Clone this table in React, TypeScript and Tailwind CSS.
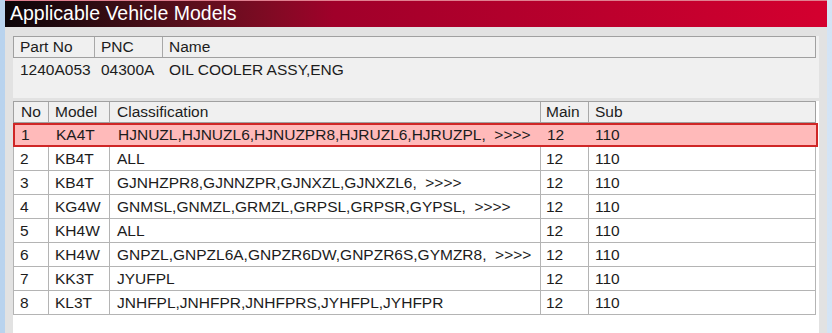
import React from "react";

const rows = [
  { no: "1", model: "KA4T", cls: "HJNUZL,HJNUZL6,HJNUZPR8,HJRUZL6,HJRUZPL,  >>>>", main: "12", sub: "110" },
  { no: "2", model: "KB4T", cls: "ALL", main: "12", sub: "110" },
  { no: "3", model: "KB4T", cls: "GJNHZPR8,GJNNZPR,GJNXZL,GJNXZL6,  >>>>", main: "12", sub: "110" },
  { no: "4", model: "KG4W", cls: "GNMSL,GNMZL,GRMZL,GRPSL,GRPSR,GYPSL,  >>>>", main: "12", sub: "110" },
  { no: "5", model: "KH4W", cls: "ALL", main: "12", sub: "110" },
  { no: "6", model: "KH4W", cls: "GNPZL,GNPZL6A,GNPZR6DW,GNPZR6S,GYMZR8,  >>>>", main: "12", sub: "110" },
  { no: "7", model: "KK3T", cls: "JYUFPL", main: "12", sub: "110" },
  { no: "8", model: "KL3T", cls: "JNHFPL,JNHFPR,JNHFPRS,JYHFPL,JYHFPR", main: "12", sub: "110" },
];

export default function App() {
  return (
    <div
      className="w-[832px] h-[333px] overflow-hidden flex bg-gradient-to-r from-[#b9d3ee] to-[#d4e4f5] text-[#1c1c1c]"
      style={{ fontFamily: '"Liberation Sans", Arial, sans-serif' }}
    >
      <div className="ml-[5px] w-[822px] flex flex-col bg-[#e2e2e2]">
        {/* title bar */}
        <div className="h-[27px] shrink-0 flex items-center pl-[5px] bg-gradient-to-r from-[#0c0508] via-[#a0002a] via-40% to-[#d4002f] border-t border-[#e08090]">
          <span className="text-white text-[19.5px] leading-none">Applicable Vehicle Models</span>
        </div>

        <div className="flex-1 flex flex-col pl-[8px] pr-[8px] pt-[9px]">
          {/* part info */}
          <div className="h-[62px] shrink-0 bg-[#f0f0f0] pr-[3px] text-[15.5px]">
            <div className="flex h-[22px] border border-[#a0a0a0] bg-[#f0f0f0] items-center">
              <div className="w-[81px] pl-[6px] border-r border-[#a8a8a8] h-full flex items-center">Part No</div>
              <div className="w-[68px] pl-[6px] border-r border-[#a8a8a8] h-full flex items-center">PNC</div>
              <div className="flex-1 pl-[6px]">Name</div>
            </div>
            <div className="flex h-[24px] items-center">
              <div className="w-[82px] pl-[7px]">1240A053</div>
              <div className="w-[68px] pl-[6px]">04300A</div>
              <div className="flex-1 pl-[6px]">OIL COOLER ASSY,ENG</div>
            </div>
          </div>

          {/* model table */}
          <div className="flex-1 mt-[3px] bg-white pr-[3px] text-[15.5px]">
            <div className="flex h-[22px] border border-[#a0a0a0] bg-[#f0f0f0]">
              <div className="w-[35px] pl-[7px] border-r border-[#a8a8a8] flex items-center">No</div>
              <div className="w-[61px] pl-[6px] border-r border-[#a8a8a8] flex items-center">Model</div>
              <div className="w-[431px] pl-[7px] border-r border-[#a8a8a8] flex items-center">Classification</div>
              <div className="w-[48px] pl-[5px] border-r border-[#a8a8a8] flex items-center">Main</div>
              <div className="flex-1 pl-[6px] flex items-center">Sub</div>
            </div>
            {rows.map((r, i) => (
              <div
                key={i}
                className={
                  i === 0
                    ? "flex h-[24px] bg-[#ffbaba] border-2 border-[#cf2626] -mr-[2px]"
                    : "flex h-[24px] border-x border-b border-[#b4b4b4]"
                }
              >
                <div className={i === 0 ? "w-[34px] pl-[6px] flex items-center" : "w-[35px] pl-[6px] border-r border-[#b4b4b4] flex items-center"}>{r.no}</div>
                <div className={i === 0 ? "w-[61px] pl-[7px] flex items-center" : "w-[61px] pl-[6px] border-r border-[#b4b4b4] flex items-center"}>{r.model}</div>
                <div className={i === 0 ? "w-[431px] pl-[8px] flex items-center whitespace-pre" : "w-[431px] pl-[7px] border-r border-[#b4b4b4] flex items-center whitespace-pre"}>{r.cls}</div>
                <div className={i === 0 ? "w-[48px] pl-[6px] flex items-center" : "w-[48px] pl-[5px] border-r border-[#b4b4b4] flex items-center"}>{r.main}</div>
                <div className="flex-1 pl-[6px] flex items-center">{r.sub}</div>
              </div>
            ))}
          </div>
        </div>
      </div>
    </div>
  );
}
